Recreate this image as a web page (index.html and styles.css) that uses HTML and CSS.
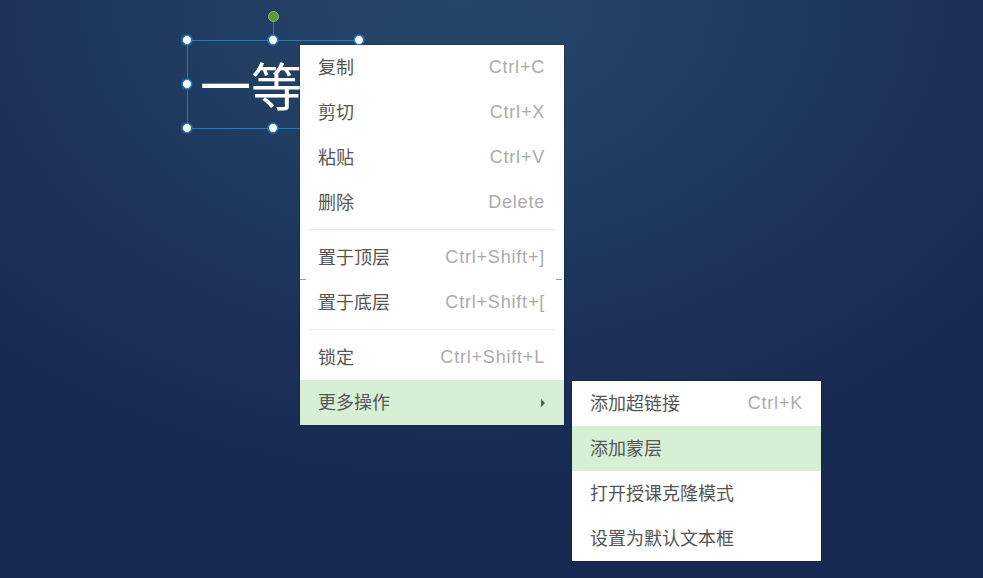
FILE: index.html
```html
<!DOCTYPE html>
<html lang="zh-CN">
<head>
    <meta charset="UTF-8">
    <title>幻灯片编辑</title>
    <link rel="stylesheet" href="styles.css">
</head>
<body>
    <div class="stage">
        <!-- selected text box on the slide -->
        <div class="textbox">
            <div class="textbox-clip"><span class="textbox-text">一等奖</span></div>
            <span class="rotate-line"></span>
            <span class="rotate-handle"></span>
            <span class="handle h-tl"></span>
            <span class="handle h-tc"></span>
            <span class="handle h-tr"></span>
            <span class="handle h-ml"></span>
            <span class="handle h-mr"></span>
            <span class="handle h-bl"></span>
            <span class="handle h-bc"></span>
            <span class="handle h-br"></span>
        </div>

        <!-- context menu -->
        <ul class="menu main-menu">
            <li class="menu-item"><span class="label">复制</span><span class="key">Ctrl+C</span></li>
            <li class="menu-item"><span class="label">剪切</span><span class="key">Ctrl+X</span></li>
            <li class="menu-item"><span class="label">粘贴</span><span class="key">Ctrl+V</span></li>
            <li class="menu-item"><span class="label">删除</span><span class="key">Delete</span></li>
            <li class="divider"></li>
            <li class="menu-item edge-mark"><span class="label">置于顶层</span><span class="key">Ctrl+Shift+]</span></li>
            <li class="menu-item"><span class="label">置于底层</span><span class="key">Ctrl+Shift+[</span></li>
            <li class="divider"></li>
            <li class="menu-item"><span class="label">锁定</span><span class="key">Ctrl+Shift+L</span></li>
            <li class="menu-item active"><span class="label">更多操作</span><span class="arrow"></span></li>
        </ul>

        <ul class="menu sub-menu">
            <li class="menu-item"><span class="label">添加超链接</span><span class="key">Ctrl+K</span></li>
            <li class="menu-item active"><span class="label">添加蒙层</span></li>
            <li class="menu-item"><span class="label">打开授课克隆模式</span></li>
            <li class="menu-item"><span class="label">设置为默认文本框</span></li>
        </ul>
    </div>
</body>
</html>
```

FILE: styles.css
```css
body {
    margin: 0;
    padding: 0;
    font-family: "Noto Sans CJK SC", "Liberation Sans", sans-serif;
}
.stage {
    position: relative;
    width: 983px;
    height: 578px;
    overflow: hidden;
    background: radial-gradient(ellipse 70% 85% at 47% 0%, #26476a 0%, #213e63 35%, #1c3159 70%, #192a52 100%);
}

/* text box + selection handles */
.textbox {
    position: absolute;
    left: 187px;
    top: 40px;
    width: 171px;
    height: 87px;
    border: 1px solid #1a80c6;
}
.textbox-clip {
    width: 112px;
    height: 100%;
    padding: 13px 0 0 12px;
    box-sizing: border-box;
    overflow: hidden;
}
.textbox-text {
    display: block;
    color: #fff;
    font-size: 51px;
    line-height: 60px;
    white-space: nowrap;
}
.rotate-line {
    position: absolute;
    left: 85px;
    top: -20px;
    width: 1px;
    height: 20px;
    background: #1a80c6;
}
.rotate-handle {
    position: absolute;
    left: 80px;
    top: -30px;
    width: 9px;
    height: 9px;
    border-radius: 50%;
    background: #5b9a3d;
    border: 1px solid #86bd66;
}
.handle {
    position: absolute;
    width: 8px;
    height: 8px;
    border-radius: 50%;
    background: #fff;
    border: 1px solid #1a80c6;
    box-shadow: 0 0 0 1px rgba(26, 128, 198, 0.45);
}
.h-tl { left: -6px; top: -6px; }
.h-tc { left: 80px; top: -6px; }
.h-tr { left: 166px; top: -6px; }
.h-ml { left: -6px; top: 38px; }
.h-mr { left: 166px; top: 38px; }
.h-bl { left: -6px; top: 82px; }
.h-bc { left: 80px; top: 82px; }
.h-br { left: 166px; top: 82px; }

/* menus */
.menu {
    position: absolute;
    margin: 0;
    padding: 0;
    list-style: none;
    background: #fff;
    box-shadow: 0 0 2px rgba(0, 0, 0, 0.35);
}
.main-menu {
    left: 300px;
    top: 45px;
    width: 264px;
}
.sub-menu {
    left: 572px;
    top: 381px;
    width: 249px;
}
.menu-item {
    position: relative;
    display: flex;
    justify-content: space-between;
    align-items: center;
    height: 45px;
    padding: 0 19px 0 18px;
    font-size: 18px;
    color: #555;
}
.sub-menu .menu-item {
    padding: 0 18px;
}
.menu-item.active {
    background: #d7efd5;
}
.label {
    margin-bottom: 4px;
}
.key {
    font-family: "Liberation Sans", sans-serif;
    font-size: 18px;
    letter-spacing: 0.8px;
    color: #ababab;
}
.divider {
    height: 1px;
    margin: 4px 9px 5px;
    background: #ececec;
}
.arrow {
    width: 0;
    height: 0;
    border-top: 4px solid transparent;
    border-bottom: 4px solid transparent;
    border-left: 4px solid #555;
}

/* faint marks at the menu edges below 置于顶层 */
.edge-mark::before,
.edge-mark::after {
    content: "";
    position: absolute;
    bottom: 0;
    width: 6px;
    height: 1px;
    background: #999;
}
.edge-mark::before { left: 0; }
.edge-mark::after { right: 2px; }
```
